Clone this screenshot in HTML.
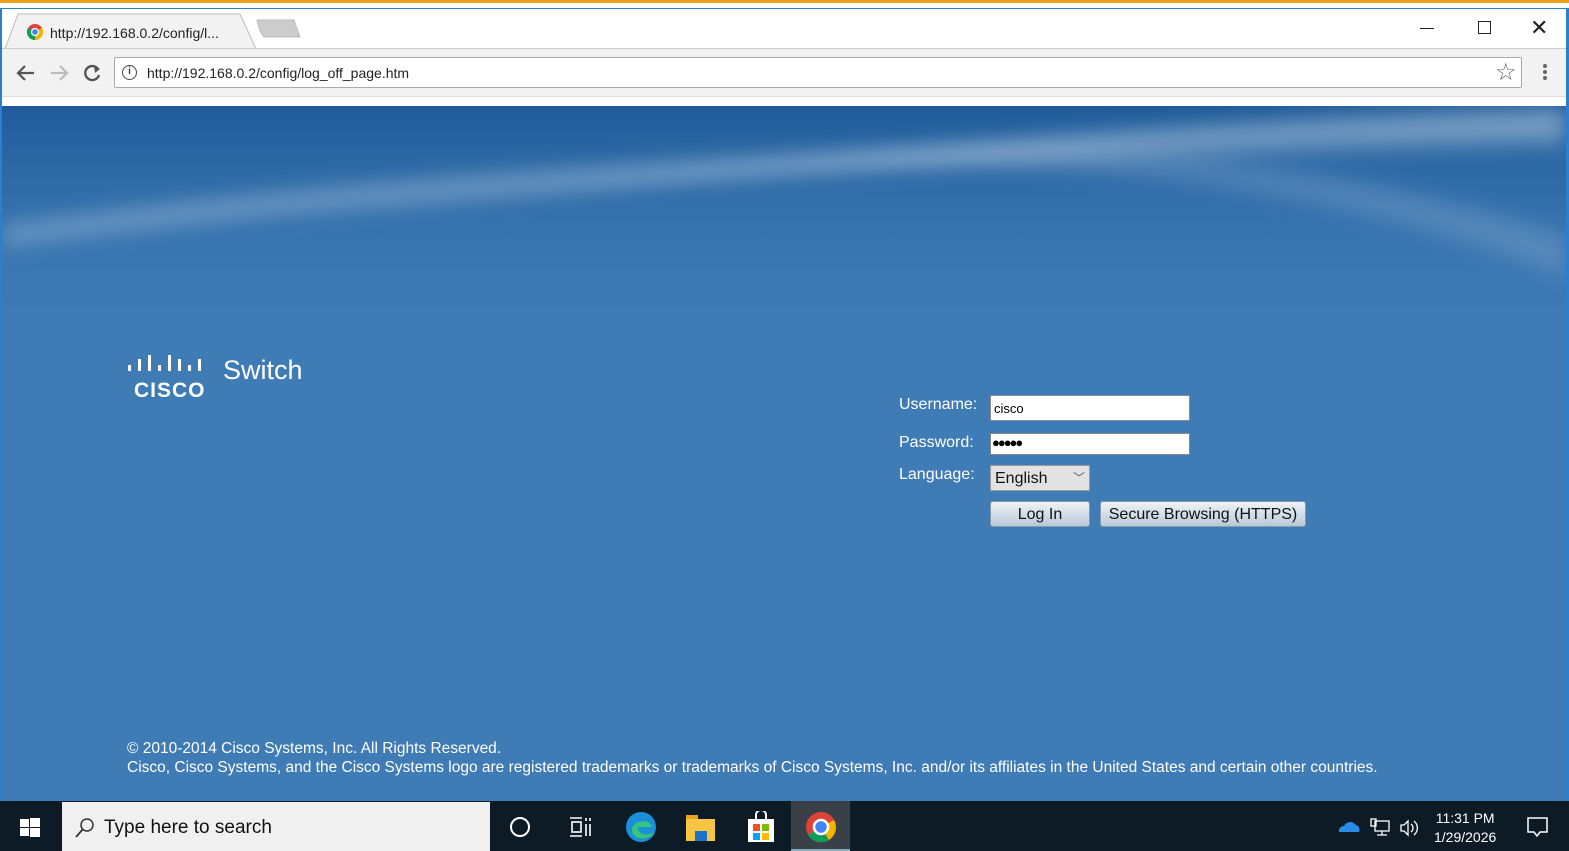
<!DOCTYPE html>
<html><head><meta charset="utf-8"><style>
*{margin:0;padding:0;box-sizing:border-box}
body{width:1569px;height:851px;overflow:hidden;font-family:"Liberation Sans",sans-serif;background:#fff;position:relative}
.abs{position:absolute}
</style></head><body>
<div class="abs" style="left:0;top:0;width:1569px;height:3px;background:#f0a020"></div>
<div class="abs" style="left:0;top:3px;width:1569px;height:5px;background:#fff"></div>
<div class="abs" style="left:0;top:8px;width:1569px;height:1px;background:#2a7fd0"></div>
<div class="abs" style="left:0;top:8px;width:2px;height:795px;background:#2a7fd0"></div>
<div class="abs" style="left:1566px;top:8px;width:3px;height:795px;background:#2a7fd0"></div>
<svg class="abs" style="left:0;top:9px" width="320" height="40">
<path d="M5 40 L18 5 L240 5 L256 40 Z" fill="#f2f2f2" stroke="#bbb"/>
<path d="M260 22 L257 11 L294 11 L300 28 L264 28 Z" fill="#ccc" stroke="#bbb"/>
<circle cx="35" cy="23" r="8" fill="#db4437"/>
<path d="M35 23 L35 31 A8 8 0 0 1 28 19 Z" fill="#0f9d58"/>
<path d="M35 23 L42 19 A8 8 0 0 1 35 31 Z" fill="#f4b400"/>
<circle cx="35" cy="23" r="3.5" fill="#4285f4" stroke="#fff" stroke-width="1.3"/>
</svg>
<div class="abs" style="left:50px;top:25px;font-size:14px;color:#222">http://192.168.0.2/config/l...</div>
<div class="abs" style="left:1420px;top:28px;width:14px;height:1px;background:#222"></div>
<div class="abs" style="left:1478px;top:21px;width:13px;height:13px;border:1.5px solid #222"></div>
<div class="abs" style="left:1530px;top:15px;font-size:22px;color:#222">✕</div>
<div class="abs" style="left:2px;top:48px;width:1564px;height:48px;background:#f2f2f2;border-top:1px solid #ccc"></div>
<div class="abs" style="left:2px;top:96px;width:1564px;height:10px;background:#fff;border-top:1px solid #ddd"></div>
<svg class="abs" style="left:12px;top:60px" width="95" height="26">
<path d="M22 13 H7 M13 6 L6 13 L13 20" stroke="#555" stroke-width="2.2" fill="none"/>
<path d="M39 13 H54 M48 6 L55 13 L48 20" stroke="#bbb" stroke-width="2.2" fill="none"/>
<path d="M86 9 A7 7 0 1 0 87 15" stroke="#555" stroke-width="2.4" fill="none"/><path d="M82 5 L88 9 L83 13Z" fill="#555"/>
</svg>
<div class="abs" style="left:114px;top:57px;width:1408px;height:31px;background:#fff;border:1px solid #aaa;border-radius:2px"></div>
<div class="abs" style="left:122px;top:65px;width:15px;height:15px;border:1.5px solid #444;border-radius:50%;font-size:10px;text-align:center;line-height:12px;font-weight:bold;color:#444">i</div>
<div class="abs" style="left:147px;top:65px;font-size:14px;color:#222">http://192.168.0.2/config/log_off_page.htm</div>
<div class="abs" style="left:1495px;top:58px;font-size:24px;color:#666">☆</div>
<div class="abs" style="left:1543px;top:64px;width:4px;height:4px;background:#666;box-shadow:0 6px #666,0 12px #666;border-radius:50%"></div>
<div class="abs" style="left:2px;top:106px;width:1564px;height:695px;background:#3f7bb5;overflow:hidden">
<svg width="1564" height="320" style="position:absolute;left:0;top:0">
<defs><linearGradient id="g" x1="0" y1="0" x2="0" y2="1"><stop offset="0" stop-color="#1f5b99"/><stop offset="1" stop-color="#3f7bb5" stop-opacity="0"/></linearGradient>
<filter id="b"><feGaussianBlur stdDeviation="10"/></filter></defs>
<rect width="1564" height="260" fill="url(#g)"/>
<g filter="url(#b)">
<path d="M0 120 C400 60 900 40 1564 10 L1564 40 C1000 50 500 80 0 140Z" fill="#fff" opacity=".25"/>
<path d="M300 110 C800 50 1200 10 1564 0 L1564 25 C1100 30 700 70 300 110Z" fill="#fff" opacity=".25"/>
<path d="M800 60 C1100 20 1350 60 1564 130 L1564 170 C1350 90 1100 50 800 60Z" fill="#fff" opacity=".15"/>
</g>
</svg>
<svg class="abs" style="left:125px;top:249px" width="80" height="46">
<g fill="#fff"><rect x="1" y="10" width="3" height="6"/><rect x="11" y="4" width="3" height="12"/><rect x="21" y="0" width="3" height="16"/><rect x="31" y="10" width="3" height="6"/><rect x="41" y="0" width="3" height="16"/><rect x="51" y="4" width="3" height="12"/><rect x="61" y="10" width="3" height="6"/><rect x="71" y="4" width="3" height="12"/></g>
<text x="7" y="42" fill="#fff" font-family="Liberation Sans" font-weight="bold" font-size="21" letter-spacing="1">CISCO</text>
</svg>
<div class="abs" style="left:221px;top:249px;font-size:27px;color:#fff">Switch</div>
<div class="abs" style="left:897px;top:290px;font-size:16px;color:#fff">Username:</div>
<div class="abs" style="left:897px;top:328px;font-size:16px;color:#fff">Password:</div>
<div class="abs" style="left:897px;top:360px;font-size:16px;color:#fff">Language:</div>
<div class="abs" style="left:988px;top:289px;width:200px;height:26px;background:#fff;border:1px solid #888;font-size:13px;padding:5px 3px">cisco</div>
<div class="abs" style="left:988px;top:327px;width:200px;height:22px;background:#fff;border:1px solid #888;font-size:13px;padding:1px 1px;letter-spacing:-2px">●●●●●</div>
<div class="abs" style="left:988px;top:359px;width:100px;height:26px;background:#e2e2e2;border:1px solid #999;font-size:16px;padding:4px 4px;color:#111">English<span style="position:absolute;left:82px;top:3px;font-size:12px;color:#555">﹀</span></div>
<div class="abs" style="left:988px;top:395px;width:100px;height:26px;background:linear-gradient(#eef2f6,#b7cad8);border:1px solid #8a9aa8;border-radius:3px;font-size:16px;text-align:center;line-height:26px;color:#111">Log In</div>
<div class="abs" style="left:1098px;top:395px;width:206px;height:26px;background:linear-gradient(#eef2f6,#b7cad8);border:1px solid #8a9aa8;border-radius:3px;font-size:16px;text-align:center;line-height:26px;color:#111">Secure Browsing (HTTPS)</div>
<div class="abs" style="left:125px;top:633px;font-size:15.5px;color:#fff;line-height:19px;white-space:nowrap">© 2010-2014 Cisco Systems, Inc. All Rights Reserved.<br>Cisco, Cisco Systems, and the Cisco Systems logo are registered trademarks or trademarks of Cisco Systems, Inc. and/or its affiliates in the United States and certain other countries.</div>
</div>
<div class="abs" style="left:0;top:801px;width:1569px;height:50px;background:#0d1b27"></div>
<svg class="abs" style="left:20px;top:817px" width="22" height="20"><g fill="#fff"><rect x="0" y="2" width="9" height="8"/><rect x="10" y="1" width="10" height="9"/><rect x="0" y="11" width="9" height="8"/><rect x="10" y="11" width="10" height="9"/></g></svg>
<div class="abs" style="left:62px;top:802px;width:428px;height:49px;background:#f0f0f0"></div>
<svg class="abs" style="left:74px;top:817px" width="22" height="22"><circle cx="13" cy="8" r="6" stroke="#333" stroke-width="1.5" fill="none"/><path d="M9 12 L2 20" stroke="#333" stroke-width="1.8"/></svg>
<div class="abs" style="left:104px;top:817px;font-size:19px;color:#111">Type here to search</div>
<div class="abs" style="left:510px;top:817px;width:20px;height:20px;border:2.5px solid #fff;border-radius:50%"></div>
<svg class="abs" style="left:569px;top:816px" width="24" height="22"><g stroke="#fff" stroke-width="1.6" fill="none"><path d="M1 2H13M1 20H13"/><rect x="3" y="6" width="9" height="10"/><path d="M17 2V5M17 8V20"/><path d="M21 2V5M21 8V20"/></g></svg>
<svg class="abs" style="left:624px;top:810px" width="34" height="34"><circle cx="17" cy="17" r="15" fill="#1b8fd8"/><path d="M8 20 C8 10 26 8 28 17 L14 17 C14 24 22 27 30 22 C26 32 8 30 8 20Z" fill="#3ccf6e" opacity=".85"/></svg>
<svg class="abs" style="left:685px;top:814px" width="32" height="28"><rect x="1" y="1" width="12" height="6" fill="#e8a417"/><rect x="1" y="5" width="29" height="22" fill="#f6c543"/><rect x="10" y="17" width="12" height="10" fill="#1a73c8"/></svg>
<svg class="abs" style="left:746px;top:811px" width="30" height="32"><path d="M10 8 V4 A5 5 0 0 1 20 4 V8" stroke="#fff" stroke-width="2" fill="none"/><rect x="2" y="8" width="26" height="23" fill="#fff"/><rect x="7" y="13" width="7" height="7" fill="#f25022"/><rect x="16" y="13" width="7" height="7" fill="#7fba00"/><rect x="7" y="22" width="7" height="7" fill="#00a4ef"/><rect x="16" y="22" width="7" height="7" fill="#ffb900"/></svg>
<div class="abs" style="left:791px;top:801px;width:59px;height:50px;background:#3a4048;border-bottom:2px solid #8ab"></div>
<svg class="abs" style="left:805px;top:811px" width="32" height="32"><circle cx="16" cy="16" r="15" fill="#db4437"/><path d="M16 16 L3 24 A15 15 0 0 0 24 29 Z" fill="#0f9d58"/><path d="M16 16 L29 9 A15 15 0 0 1 24 29 Z" fill="#f4b400"/><circle cx="16" cy="16" r="7" fill="#4285f4" stroke="#fff" stroke-width="2.5"/></svg>
<svg class="abs" style="left:1337px;top:818px" width="86" height="20"><path d="M2 14 A5 5 0 0 1 7 8 A7 7 0 0 1 19 7 A5 5 0 0 1 22 14Z" fill="#2a8ce8"/><g stroke="#fff" stroke-width="1.3" fill="none"><rect x="38" y="3" width="14" height="10"/><rect x="34" y="1" width="5" height="7"/><path d="M45 13V17M40 17H50"/><path d="M64 7H67L71 3V17L67 13H64Z"/><path d="M74 6 A5 5 0 0 1 74 14M77 3 A9 9 0 0 1 77 17"/></g></svg>
<div class="abs" style="left:1434px;top:809px;font-size:14px;color:#fff;text-align:center;line-height:19px">11:31 PM<br>1/29/2026</div>
<svg class="abs" style="left:1527px;top:817px" width="22" height="22"><path d="M1 1H20V15H13L10 19L7 15H1Z" stroke="#fff" stroke-width="1.5" fill="none"/></svg>
</body></html>
